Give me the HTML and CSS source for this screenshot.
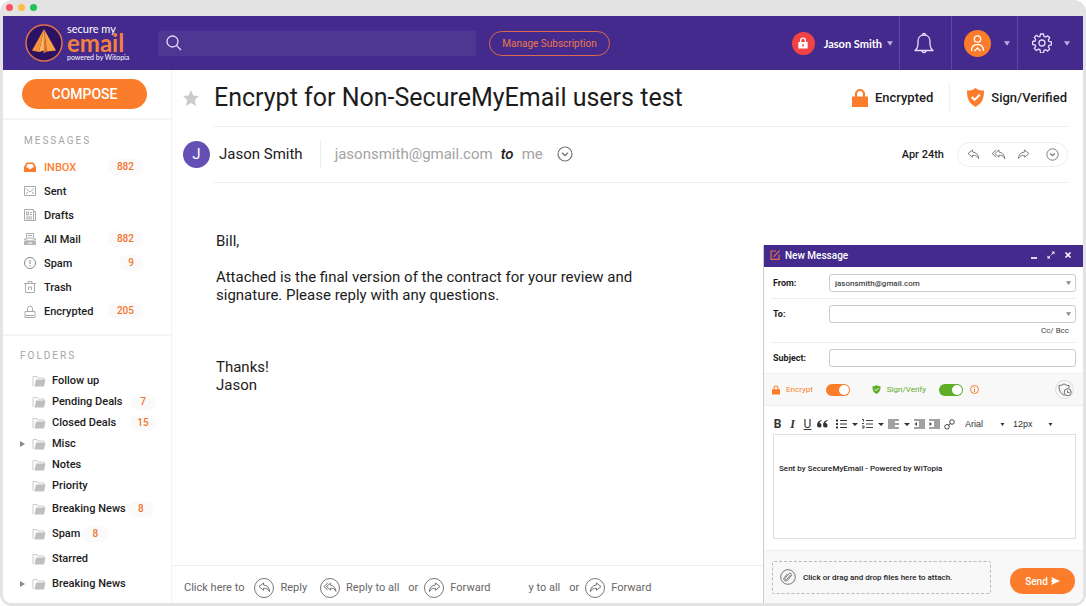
FILE: index.html
```html
<!DOCTYPE html>
<html lang="en">

<head>
    <meta charset="UTF-8">
    <meta name="viewport" content="width=device-width, initial-scale=1.0">
    <title>SecureMyEmail</title>
    <link rel="stylesheet" href="styles.css">
</head>

<body>
    <!-- Shared icons -->
    <svg class="sprite" aria-hidden="true">
        <symbol id="caret" viewBox="0 0 8 6"><path d="M0 0h8L4 6z" fill="currentColor"/></symbol>
        <symbol id="folder" viewBox="0 0 14 12">
            <path d="M1 11V1.500h4l1 1.500h6V5" fill="none" stroke="#ccc"/>
            <path d="M4 4.500h9.500L12 11.500H2.500z" fill="#bfbfbf"/>
        </symbol>
        <symbol id="reply" viewBox="0 0 14 12">
            <path d="M6 1L1 5l5 4V6.800c3 0 5 .7 6.600 3.700C12.500 6.500 10 3.600 6 3.300z" fill="none" stroke="currentColor" stroke-linejoin="round"/>
        </symbol>
        <symbol id="reply-all" viewBox="0 0 16 12">
            <path d="M8.500 1L4 5l4.500 4V6.800c3 0 5 .7 6.300 3.700C14.600 6.500 12 3.600 8.500 3.300z" fill="none" stroke="currentColor" stroke-linejoin="round"/>
            <path d="M5.500 1L1 5l4.500 4" fill="none" stroke="currentColor" stroke-linejoin="round"/>
        </symbol>
        <symbol id="forward" viewBox="0 0 14 12">
            <path d="M8 1l5 4-5 4V6.800c-3 0-5 .7-6.600 3.700C1.500 6.500 4 3.600 8 3.300z" fill="none" stroke="currentColor" stroke-linejoin="round"/>
        </symbol>
        <symbol id="more" viewBox="0 0 16 16">
            <circle cx="8" cy="8" r="7" fill="none" stroke="currentColor" stroke-width="1.200"/>
            <path d="M5 6.800l3 2.700 3-2.700" fill="none" stroke="currentColor" stroke-width="1.400"/>
        </symbol>
        <symbol id="lock" viewBox="0 0 16 20">
            <path d="M4 9V6a4 4 0 0 1 8 0v3" fill="none" stroke="currentColor" stroke-width="2.200"/>
            <path d="M0 8.500h16V19H0z" fill="currentColor"/>
        </symbol>
        <symbol id="shield" viewBox="0 0 18 20">
            <path d="M9 0c2.500 2 5 2.700 9 2.700 0 8-1.500 13.300-9 17.300C1.500 16 0 10.700 0 2.700 4 2.700 6.500 2 9 0z" fill="currentColor"/>
            <path d="M5 9.500l3 3 5.500-5.500" fill="none" stroke="#fff" stroke-width="2.200"/>
        </symbol>
    </svg>

    <div class="window">
        <div class="titlebar">
            <span class="dot red"></span>
            <span class="dot yellow"></span>
            <span class="dot green"></span>
        </div>

        <header class="header">
            <a href="#" class="logo">
                <svg width="38" height="38" viewBox="0 0 38 38" aria-hidden="true">
                    <circle cx="19" cy="19" r="18" fill="#2c1263" stroke="#e2704a" stroke-width="1.500"/>
                    <path d="M19 5L7 26.500l7 1.500z" fill="#f79038"/>
                    <path d="M19 5l-5 23 5-1.500z" fill="#fbb35c"/>
                    <path d="M19 5v21.500l-1 3 4-2z" fill="#e5702c"/>
                    <path d="M19 5l3 22.500 9-1z" fill="#fca046"/>
                </svg>
                <span class="logo-text">
                    <span class="logo-top">secure my</span>
                    <span class="logo-name">email</span>
                    <span class="logo-sub">powered by Witopia</span>
                </span>
            </a>

            <label class="search">
                <svg width="16" height="16" viewBox="0 0 16 16" fill="none" stroke="#e6dcff" stroke-width="1.300" aria-hidden="true">
                    <circle cx="6.500" cy="6.500" r="5.500"/>
                    <path d="M10.500 10.500L15 15"/>
                </svg>
                <input type="search" aria-label="Search">
            </label>

            <button type="button" class="subscription">Manage Subscription</button>

            <div class="account">
                <button type="button" class="user">
                    <span class="user-lock"><svg width="10" height="12" viewBox="0 0 16 20"><use href="#lock"/><path d="M8 12v4" stroke="#f14343" stroke-width="2.500"/></svg></span>
                    Jason Smith
                    <svg class="caret" width="6" height="5"><use href="#caret"/></svg>
                </button>
                <button type="button" class="bell" aria-label="Notifications">
                    <svg width="20" height="22" viewBox="0 0 20 22" fill="none" stroke="#e6dcff" stroke-width="1.300" stroke-linejoin="round">
                        <path d="M1 18.500c2-1.500 3-3.500 3-7V9c0-3.500 2.500-6 6-6s6 2.500 6 6v2.500c0 3.500 1 5.500 3 7z"/>
                        <path d="M8.500 3a1.500 1.500 0 0 1 3 0M8 18.500a2 2 0 0 0 4 0"/>
                    </svg>
                </button>
                <button type="button" class="profile" aria-label="Profile">
                    <svg width="27" height="27" viewBox="0 0 27 27" fill="none" stroke="#fff" stroke-width="1.300">
                        <circle cx="13.500" cy="13.500" r="13.500" fill="#fb7d2b" stroke="none"/>
                        <circle cx="13.500" cy="9" r="3.200"/>
                        <path d="M7.500 21c0-4 2-6.500 6-6.500s6 2.500 6 6.500M10.500 21l3-3 3 3"/>
                    </svg>
                    <svg class="caret" width="6" height="5"><use href="#caret"/></svg>
                </button>
                <button type="button" class="settings" aria-label="Settings">
                    <svg width="20" height="20" viewBox="0 0 20 20" fill="none" stroke="#e6dcff" stroke-width="1.300" stroke-linejoin="round">
                        <path d="M8.500 1h3l.5 2.500 1.500.6 2.100-1.400 2.100 2.100-1.400 2.100.6 1.500 2.500.5v3l-2.500.5-.6 1.500 1.400 2.100-2.100 2.100-2.100-1.400-1.500.6-.5 2.500h-3L8 16.700l-1.500-.6-2.100 1.400-2.100-2.100 1.400-2.100-.6-1.500L.6 11.500v-3L3.100 8l.6-1.500-1.400-2.100 2.100-2.100 2.100 1.400L8 3.500z"/>
                        <circle cx="10" cy="10" r="3"/>
                    </svg>
                    <svg class="caret" width="6" height="5"><use href="#caret"/></svg>
                </button>
            </div>
        </header>

        <div class="content">
            <aside class="sidebar">
                <div class="compose-box">
                    <button type="button" class="compose">COMPOSE</button>
                </div>

                <nav class="messages">
                    <h2>MESSAGES</h2>
                    <a href="#" class="active">
                        <svg width="12" height="12" viewBox="0 0 12 12"><path d="M2.500 1.500h7L12 6v5H0V6zM3.500 3L2 6.500h2L5 8h2l1-1.500h2L8.500 3z" fill="#fb7d2b" fill-rule="evenodd"/></svg>
                        <span>INBOX</span><b>882</b>
                    </a>
                    <a href="#">
                        <svg width="12" height="12" viewBox="0 0 12 12" fill="none" stroke="#aaa"><path d="M.5 1.500h11v9H.5zM2 3.500l4 3.500 4-3.500M2 9l2-2M10 9L8 7"/></svg>
                        <span>Sent</span>
                    </a>
                    <a href="#">
                        <svg width="12" height="12" viewBox="0 0 12 12" fill="none" stroke="#aaa"><path d="M.5.500h9v11h-9zM9.500 2.500h2v9h-2M2.500 3h2v3h-2zM6 3.500h2M6 5.500h2M2 8h6M2 9.800h6"/></svg>
                        <span>Drafts</span>
                    </a>
                    <a href="#">
                        <svg width="12" height="12" viewBox="0 0 12 12" fill="none" stroke="#aaa"><path d="M2.500 4V.500h7V4M4 2.500h4M1.500 5L.500 7h3l1 1h3l1-1h3l-1-2z"/><path d="M0 8h12v4H0z" fill="#b5b5b5" stroke="none"/><path d="M4 10h4" stroke="#fff"/></svg>
                        <span>All Mail</span><b>882</b>
                    </a>
                    <a href="#">
                        <svg width="12" height="12" viewBox="0 0 12 12" fill="none" stroke="#888"><circle cx="6" cy="6" r="5.500"/><path d="M6 3v4M6 8v1.200"/></svg>
                        <span>Spam</span><b>9</b>
                    </a>
                    <a href="#">
                        <svg width="12" height="12" viewBox="0 0 12 12" fill="none" stroke="#aaa"><path d="M0 2.500h12M4 2.500v-2h4v2M1.500 2.500v9h9v-9M4.500 9V6h3v3"/></svg>
                        <span>Trash</span>
                    </a>
                    <a href="#">
                        <svg width="12" height="13" viewBox="0 0 12 13" fill="none" stroke="#aaa"><path d="M1 6.500h10v6H1zM3.500 6.500V3.500a2.500 2.500 0 0 1 5 0v3M2 10.500h8"/></svg>
                        <span>Encrypted</span><b>205</b>
                    </a>
                </nav>

                <nav class="folders">
                    <h2>FOLDERS</h2>
                    <a href="#"><svg width="14" height="12"><use href="#folder"/></svg><span>Follow up</span></a>
                    <a href="#" class="deal"><svg width="14" height="12"><use href="#folder"/></svg><span>Pending Deals</span><b>7</b></a>
                    <a href="#" class="deal"><svg width="14" height="12"><use href="#folder"/></svg><span>Closed Deals</span><b>15</b></a>
                    <a href="#" class="parent"><svg width="14" height="12"><use href="#folder"/></svg><span>Misc</span></a>
                    <a href="#"><svg width="14" height="12"><use href="#folder"/></svg><span>Notes</span></a>
                    <a href="#"><svg width="14" height="12"><use href="#folder"/></svg><span>Priority</span></a>
                    <a href="#" class="tall"><svg width="14" height="12"><use href="#folder"/></svg><span>Breaking News</span><b>8</b></a>
                    <a href="#" class="tall"><svg width="14" height="12"><use href="#folder"/></svg><span>Spam</span><b>8</b></a>
                    <a href="#" class="tall"><svg width="14" height="12"><use href="#folder"/></svg><span>Starred</span></a>
                    <a href="#" class="tall parent"><svg width="14" height="12"><use href="#folder"/></svg><span>Breaking News</span></a>
                </nav>
            </aside>

            <main class="mail">
                <div class="subject">
                    <svg class="star" width="16" height="16" viewBox="0 0 16 16"><path d="M8 0l2.400 5.400 5.600.6-4.200 3.900L13 16l-5-3-5 3 1.200-6.100L0 6l5.600-.6z" fill="#ccc"/></svg>
                    <h1>Encrypt for Non-SecureMyEmail users test</h1>
                    <div class="status">
                        <svg width="16" height="20"><use href="#lock"/></svg>
                        Encrypted
                    </div>
                    <div class="status verified">
                        <svg width="17" height="19"><use href="#shield"/></svg>
                        Sign/Verified
                    </div>
                </div>

                <div class="sender">
                    <span class="avatar">J</span>
                    <span class="name">Jason Smith</span>
                    <span class="address">jasonsmith@gmail.com</span>
                    <em>to</em>
                    <span class="me">me</span>
                    <button type="button" class="details" aria-label="Details"><svg width="16" height="16"><use href="#more"/></svg></button>
                    <time>Apr 24th</time>
                    <div class="actions">
                        <button type="button" aria-label="Reply"><svg width="13" height="11"><use href="#reply"/></svg></button>
                        <button type="button" aria-label="Reply to all"><svg width="15" height="11"><use href="#reply-all"/></svg></button>
                        <button type="button" aria-label="Forward"><svg width="13" height="11"><use href="#forward"/></svg></button>
                        <button type="button" class="last" aria-label="More"><svg width="13" height="13"><use href="#more"/></svg></button>
                    </div>
                </div>

                <article class="message">
                    <p>Bill,</p>
                    <p>Attached is the final version of the contract for your review and signature. Please reply with any questions.</p>
                    <p class="sign">Thanks!<br>Jason</p>
                </article>

                <div class="answer">
                    <span class="hint">Click here to</span>
                    <button type="button"><i><svg width="13" height="11"><use href="#reply"/></svg></i>Reply</button>
                    <button type="button"><i><svg width="14" height="11"><use href="#reply-all"/></svg></i>Reply to all</button>
                    <span class="or">or</span>
                    <button type="button"><i><svg width="13" height="11"><use href="#forward"/></svg></i>Forward</button>
                    <span class="rest">y to all</span>
                    <span class="or">or</span>
                    <button type="button"><i><svg width="13" height="11"><use href="#forward"/></svg></i>Forward</button>
                </div>
            </main>
        </div>

        <!-- New message popup -->
        <form class="popup">
            <div class="popup-head">
                <svg width="10" height="10" viewBox="0 0 10 10" fill="none" stroke="#e2704a" stroke-width="1.200"><path d="M6 1H1v8.400h8V4.500M3.500 6.800L9.500.700"/></svg>
                <h2>New Message</h2>
                <button type="button" aria-label="Minimize"><svg width="8" height="8" viewBox="0 0 8 8"><path d="M1 7h6" stroke="#fff" stroke-width="1.600"/></svg></button>
                <button type="button" aria-label="Expand"><svg width="8" height="8" viewBox="0 0 8 8"><path d="M4.500.500h3v3zM.500 4.500v3h3z" fill="#fff"/><path d="M6.500 1.500l-5 5" stroke="#fff" stroke-dasharray="3 1.500"/></svg></button>
                <button type="button" aria-label="Close"><svg width="8" height="8" viewBox="0 0 8 8"><path d="M1.500 1.500l5 5M6.500 1.500l-5 5" stroke="#fff" stroke-width="1.600"/></svg></button>
            </div>

            <div class="fields">
                <div class="row">
                    <label for="from">From:</label>
                    <div class="field">
                        <select id="from"><option>jasonsmith@gmail.com</option></select>
                        <svg width="5" height="6"><use href="#caret"/></svg>
                    </div>
                </div>
                <div class="row">
                    <label for="to">To:</label>
                    <div class="field">
                        <input type="text" id="to">
                        <svg width="5" height="6"><use href="#caret"/></svg>
                    </div>
                    <a href="#" class="cc">Cc/ Bcc</a>
                </div>
                <div class="row">
                    <label for="subject">Subject:</label>
                    <div class="field"><input type="text" id="subject"></div>
                </div>
            </div>

            <div class="security">
                <label class="encrypt" for="encrypt"><svg width="8" height="10"><use href="#lock"/></svg>Encrypt</label>
                <input type="checkbox" class="switch orange" id="encrypt" checked>
                <label class="verify" for="verify"><svg width="9" height="9"><use href="#shield"/></svg>Sign/Verify</label>
                <input type="checkbox" class="switch" id="verify" checked>
                <svg class="info" width="9" height="9" viewBox="0 0 9 9" fill="none" stroke="#fb7d2b"><circle cx="4.500" cy="4.500" r="4"/><path d="M4.500 2v1M4.500 4v3"/></svg>
                <button type="button" class="expiry" aria-label="Expiry">
                    <svg width="14" height="14" viewBox="0 0 14 14" fill="none" stroke="#666"><path d="M6.500 12.500C2.500 10.500 1 7.500 1 2.500c2 0 3.500-.5 5-1.700C7.500 2 9 2.500 11 2.500V5"/><circle cx="9.700" cy="9.200" r="3.500"/><path d="M9.500 7.500v2h2"/></svg>
                </button>
            </div>

            <div class="tools">
                <button type="button" class="bold">B</button>
                <button type="button" class="italic">I</button>
                <button type="button" class="underline">U</button>
                <button type="button" class="quote" aria-label="Quote"><svg width="11" height="8" viewBox="0 0 11 8" fill="#333"><path d="M4.500 0C1.500.500 0 2.500 0 5.300A2.300 2.300 0 1 0 2.500 3C2.700 1.800 3.400 1.200 4.800 1zM10.500 0C7.500.500 6 2.500 6 5.300A2.300 2.300 0 1 0 8.500 3c.2-1.200.9-1.800 2.300-2z"/></svg></button>
                <button type="button" class="drop" aria-label="Bulleted list"><svg width="11" height="10" viewBox="0 0 11 10" stroke="#333" stroke-width="1.200"><path d="M0 1.500h2M0 5h2M0 8.500h2" stroke-width="2"/><path d="M4 1.500h7M4 5h7M4 8.500h7"/></svg></button>
                <button type="button" class="drop" aria-label="Numbered list"><svg width="11" height="10" viewBox="0 0 11 10" fill="none" stroke="#444"><path d="M0 .5h1.500v2M0 4.500h2M0 7h2v2H0"/><path d="M4 1.500h7M4 5h7M4 8.500h7"/></svg></button>
                <button type="button" class="drop" aria-label="Align"><svg width="11" height="10" viewBox="0 0 11 10" stroke="#444" stroke-width="1.200"><path d="M0 1h11M0 3h7M0 5h11M0 7h7M0 9h11"/></svg></button>
                <button type="button" aria-label="Outdent"><svg width="11" height="10" viewBox="0 0 11 10" stroke="#444" stroke-width="1.200"><path d="M0 1h11M5 3h6M5 5h6M5 7h6M0 9h11"/><path d="M3 3v4L.500 5z" fill="#444" stroke="none"/></svg></button>
                <button type="button" aria-label="Indent"><svg width="11" height="10" viewBox="0 0 11 10" stroke="#444" stroke-width="1.200"><path d="M0 1h11M5 3h6M5 5h6M5 7h6M0 9h11"/><path d="M.500 3v4L3 5z" fill="#444" stroke="none"/></svg></button>
                <button type="button" aria-label="Link"><svg width="11" height="11" viewBox="0 0 11 11" fill="none" stroke="#444"><circle cx="3" cy="7.800" r="2.300"/><circle cx="8" cy="3" r="2.300"/><path d="M4 6.800L7 4"/></svg></button>
                <div class="picker font"><select aria-label="Font"><option>Arial</option></select><svg width="5" height="3"><use href="#caret"/></svg></div>
                <div class="picker"><select aria-label="Size"><option>12px</option></select><svg width="5" height="3"><use href="#caret"/></svg></div>
            </div>

            <textarea class="editor" aria-label="Message">Sent by SecureMyEmail - Powered by WiTopia</textarea>

            <div class="popup-foot">
                <button type="button" class="attach">
                    <svg width="16" height="16" viewBox="0 0 16 16" fill="none" stroke="#777"><circle cx="8" cy="8" r="7.300"/><path d="M10.500 6L7 10.200a1 1 0 0 1-1.700-1.300L8.800 4.800a1.600 1.600 0 0 1 2.500 2L7.700 11.200a2.200 2.200 0 0 1-3.400-2.800L7 5.200"/></svg>
                    Click or drag and drop files here to attach.
                </button>
                <button type="submit" class="send">
                    Send
                    <svg width="9" height="8" viewBox="0 0 9 8"><path d="M0 0l9 4-9 4 1.500-3L0 4.500v-1L1.500 3z" fill="#fff"/></svg>
                </button>
            </div>
        </form>
    </div>
</body>

</html>
```

FILE: styles.css
```css
* {
    box-sizing: border-box;
}

body {
    margin: 0;
    background: #fff;
    color: #1c1c1c;
    font-family: Roboto, "Liberation Sans", sans-serif;
    font-size: 11px;
}

h1,
h2,
p {
    margin: 0;
}

a {
    color: inherit;
    text-decoration: none;
}

svg {
    display: block;
    flex: none;
}

button,
input,
select,
textarea {
    margin: 0;
    padding: 0;
    border: none;
    background: none;
    color: inherit;
    font: inherit;
    outline: none;
}

button {
    display: flex;
    align-items: center;
    justify-content: center;
    cursor: pointer;
}

select {
    appearance: none;
}

.sprite {
    position: absolute;
    width: 0;
    height: 0;
}

/* Window */
.window {
    position: relative;
    display: flex;
    flex-direction: column;
    min-height: 100vh;
    padding: 0 3px 3px;
    background: #e4e3e3;
    border-radius: 12px;
}

.titlebar {
    display: flex;
    align-items: center;
    gap: 5px;
    height: 16px;
    padding: 0 3px 2px;
}

.dot {
    width: 7px;
    height: 7px;
    border-radius: 50%;
}

.red { background: #fb5160; }
.yellow { background: #fcbc45; }
.green { background: #20c358; }

/* Header */
.header {
    display: flex;
    align-items: center;
    height: 54px;
    padding-left: 22px;
    background: #432a8c;
    color: #fff;
}

.logo {
    display: flex;
    align-items: center;
    gap: 4px;
    width: 133px;
    font-family: Lato, sans-serif;
}

.logo-text {
    display: flex;
    flex-direction: column;
}

.logo-top {
    font-size: 11px;
    line-height: 9px;
}

.logo-name {
    color: #f5813f;
    font-size: 24px;
    font-weight: bold;
    line-height: 20px;
}

.logo-sub {
    font-size: 7px;
    line-height: 9px;
}

.search {
    display: flex;
    align-items: center;
    flex: 0 1 318px;
    height: 25px;
    padding-left: 8px;
    background: #4d3793;
}

.search input {
    flex: 1;
    min-width: 0;
    padding-left: 8px;
}

.subscription {
    width: 121px;
    height: 25px;
    margin-left: 13px;
    border: 1px solid #d9694f;
    border-radius: 13px;
    color: #e8794c;
    font-size: 10px;
}

.account {
    display: flex;
    align-self: stretch;
    margin-left: auto;
}

.account button + button {
    border-left: 1px solid #5e48a0;
}

.caret {
    color: #b9aee0;
}

.user {
    gap: 5px;
    padding-right: 6px;
    font-family: Lato, sans-serif;
    font-weight: bold;
}

.user-lock {
    display: flex;
    align-items: center;
    justify-content: center;
    width: 23px;
    height: 23px;
    margin-right: 4px;
    border-radius: 50%;
    background: #f14343;
}

.bell {
    width: 52px;
    padding-right: 4px;
}

.profile {
    gap: 13px;
    width: 66px;
    padding-left: 4px;
}

.settings {
    gap: 12px;
    width: 66px;
}

/* Sidebar */
.content {
    display: flex;
    flex: 1;
    background: #fff;
    border-radius: 0 0 8px 8px;
}

.sidebar {
    width: 169px;
    border-right: 1px solid #f3f3f3;
    font-weight: 500;
}

.compose-box {
    padding: 9px 24px 9px 19px;
    border-bottom: 2px solid #f5f5f5;
}

.compose {
    width: 100%;
    height: 30px;
    border-radius: 15px;
    background: #fb7d2b;
    color: #fff;
    font-size: 14px;
    font-weight: 500;
}

.sidebar h2 {
    color: #a5a5a5;
    font-size: 10px;
    font-weight: normal;
    letter-spacing: 2px;
    line-height: 12px;
}

.sidebar a {
    display: flex;
    align-items: center;
}

.sidebar b {
    border-radius: 8px;
    background: #fafafa;
    color: #f4742c;
    font-size: 10px;
    font-weight: 500;
    line-height: 16px;
}

.messages {
    padding: 15px 28px 11px 21px;
    border-bottom: 2px solid #f5f5f5;
}

.messages h2 {
    margin-bottom: 8px;
}

.messages a {
    gap: 8px;
    height: 24px;
}

.messages .active {
    color: #fb7d2b;
}

.messages b {
    margin-left: auto;
    padding: 0 9px;
}

.folders {
    padding: 14px 0 6px 17px;
}

.folders h2 {
    margin-bottom: 8px;
}

.folders a {
    gap: 6px;
    height: 21px;
    padding-left: 12px;
}

.folders .tall {
    height: 25px;
}

.folders .parent {
    padding-left: 0;
}

.folders .parent::before {
    content: "";
    margin-right: 1px;
    border: 3px solid transparent;
    border-left: 5px solid #888;
    border-right: none;
}

.folders .deal span {
    min-width: 76px;
}

.folders b {
    width: 26px;
    margin-left: -4px;
    text-align: center;
}

/* Mail */
.mail {
    display: flex;
    flex: 1;
    flex-direction: column;
    min-width: 0;
}

.subject,
.sender {
    position: relative;
    display: flex;
    align-items: center;
    height: 57px;
    padding: 0 16px 2px 11px;
}

.subject::after,
.sender::after {
    content: "";
    position: absolute;
    left: 42px;
    right: 15px;
    bottom: 0;
    border-bottom: 1px solid #eee;
}

h1 {
    margin: 0 auto 0 15px;
    font-size: 25px;
    font-weight: normal;
    white-space: nowrap;
}

.status {
    display: flex;
    align-items: center;
    gap: 7px;
    font-size: 13px;
    font-weight: 500;
}

.status svg {
    color: #fb7d2b;
}

.verified {
    height: 30px;
    margin-left: 16px;
    padding-left: 17px;
    border-left: 1px solid #f0f0f0;
}

.sender {
    height: 56px;
    padding-right: 15px;
    color: #a3a3a3;
    font-size: 15px;
}

.avatar {
    width: 27px;
    height: 27px;
    border-radius: 50%;
    background: #6450b4;
    color: #fff;
    line-height: 27px;
    text-align: center;
}

.name {
    margin: 0 17px 0 9px;
    color: #1c1c1c;
}

.address {
    padding: 5px 0 5px 14px;
    border-left: 1px solid #eee;
}

.sender em {
    margin: 0 8px;
    color: #1c1c1c;
    font-weight: 500;
}

.details {
    margin-left: 14px;
    color: #777;
}

.sender time {
    margin: 0 13px 0 auto;
    color: #1c1c1c;
    font-size: 11px;
    font-weight: 500;
}

.actions {
    display: flex;
    align-items: center;
    gap: 11px;
    height: 25px;
    padding: 0 8px 0 9px;
    border: 1px solid #eee;
    border-radius: 13px;
    color: #777;
}

.actions .last {
    margin-left: 5px;
}

.message {
    flex: 1;
    max-width: 480px;
    padding: 49px 0 0 44px;
    font-size: 15px;
    line-height: 18px;
}

.message p {
    margin-bottom: 18px;
}

.message .sign {
    margin-top: 54px;
}

.answer {
    display: flex;
    align-items: center;
    gap: 10px;
    height: 38px;
    padding: 6px 0 0 12px;
    border-top: 1px solid #eee;
    color: #666;
    white-space: nowrap;
}

.answer button {
    gap: 6px;
}

.answer i {
    display: flex;
    align-items: center;
    justify-content: center;
    width: 20px;
    height: 20px;
    border: 1px solid #777;
    border-radius: 50%;
}

.answer button + button {
    margin-left: 3px;
}

.answer .or {
    margin: 0 -4px 0 -1px;
}

.answer .rest {
    margin-left: 28px;
}

/* New message popup */
.popup {
    position: absolute;
    right: 3px;
    bottom: 3px;
    width: 320px;
    border-left: 1px solid #ccc;
    border-radius: 0 0 10px 0;
    background: #fff;
    overflow: hidden;
    font-size: 8px;
}

.popup-head {
    display: flex;
    align-items: center;
    gap: 9px;
    height: 22px;
    padding: 0 11px 2px 6px;
    background: #432a8c;
    color: #fff;
}

.popup-head h2 {
    flex: 1;
    margin-left: -4px;
    font-size: 10px;
    font-weight: 500;
}

.fields {
    padding: 0 7px;
}

.row {
    display: grid;
    grid-template-columns: 56px 1fr;
    align-items: center;
    padding: 7px 0 6px 2px;
}

.row + .row {
    padding-top: 6px;
    border-top: 1px solid #eee;
}

.row label {
    font-size: 9px;
    font-weight: bold;
}

.field {
    display: flex;
    align-items: center;
    height: 18px;
    padding: 0 4px 0 5px;
    border: 1px solid #ccc;
    border-radius: 3px;
    color: #888;
}

.field select,
.field input {
    flex: 1;
    min-width: 0;
    color: #444;
    font-weight: 500;
}

.cc {
    grid-column: 2;
    padding: 3px 7px 0 0;
    color: #444;
    line-height: 10px;
    text-align: right;
}

.security {
    display: flex;
    align-items: center;
    height: 33px;
    padding: 0 9px 0 8px;
    border: 1px solid #f0f0f0;
    border-width: 1px 0;
    background: #f8f8f8;
}

.security label {
    display: flex;
    align-items: center;
    gap: 6px;
}

.encrypt {
    color: #fb7d2b;
}

.verify {
    margin-left: 22px;
    color: #5ead27;
}

.switch {
    display: flex;
    justify-content: flex-end;
    width: 24px;
    height: 12px;
    margin-left: 13px;
    padding: 1px;
    border-radius: 6px;
    background: #5ead27;
    appearance: none;
}

.switch.orange {
    background: #fb7d2b;
}

.switch::before {
    content: "";
    width: 10px;
    height: 10px;
    border-radius: 50%;
    background: #fff;
}

.info {
    margin-left: 7px;
}

.expiry {
    width: 19px;
    height: 19px;
    margin-left: auto;
    border: 1px solid #ddd;
    border-radius: 50%;
}

.tools {
    display: flex;
    align-items: center;
    gap: 4px;
    height: 28px;
    padding: 8px 8px 0;
    color: #333;
    font-size: 11px;
}

.tools .bold,
.tools .italic,
.tools .underline {
    width: 11px;
    font-size: 12px;
}

.tools .bold {
    font-weight: bold;
}

.tools .italic {
    font-family: "Liberation Serif", serif;
    font-style: italic;
    font-weight: bold;
}

.tools .underline {
    text-decoration: underline;
}

.quote {
    margin-right: 4px;
}

.drop {
    gap: 5px;
}

.drop::after {
    content: "";
    border: 3px solid transparent;
    border-top-color: #333;
    border-bottom: none;
}

.picker {
    display: flex;
    align-items: center;
    width: 40px;
    margin-left: 4px;
    font-family: "Liberation Sans", sans-serif;
    font-size: 9px;
}

.picker.font {
    margin-left: 6px;
}

.picker select {
    flex: 1;
    min-width: 0;
}

.editor {
    display: block;
    width: calc(100% - 16px);
    height: 105px;
    margin: 0 7px 11px 9px;
    padding: 29px 5px 5px;
    border: 1px solid #ddd;
    font-weight: 500;
    line-height: 10px;
    resize: none;
}

.popup-foot {
    display: flex;
    align-items: center;
    justify-content: space-between;
    height: 53px;
    padding: 0 8px;
    border-top: 1px solid #eee;
    background: #f8f8f8;
}

.attach {
    gap: 7px;
    width: 219px;
    height: 33px;
    padding-left: 7px;
    border: 1px dashed #bbb;
    border-radius: 2px;
    justify-content: flex-start;
    font-weight: 500;
}

.send {
    gap: 3px;
    width: 65px;
    height: 26px;
    margin-top: 8px;
    border-radius: 13px;
    background: #fb7d2b;
    color: #fff;
    font-size: 10px;
    font-weight: 500;
}
```
